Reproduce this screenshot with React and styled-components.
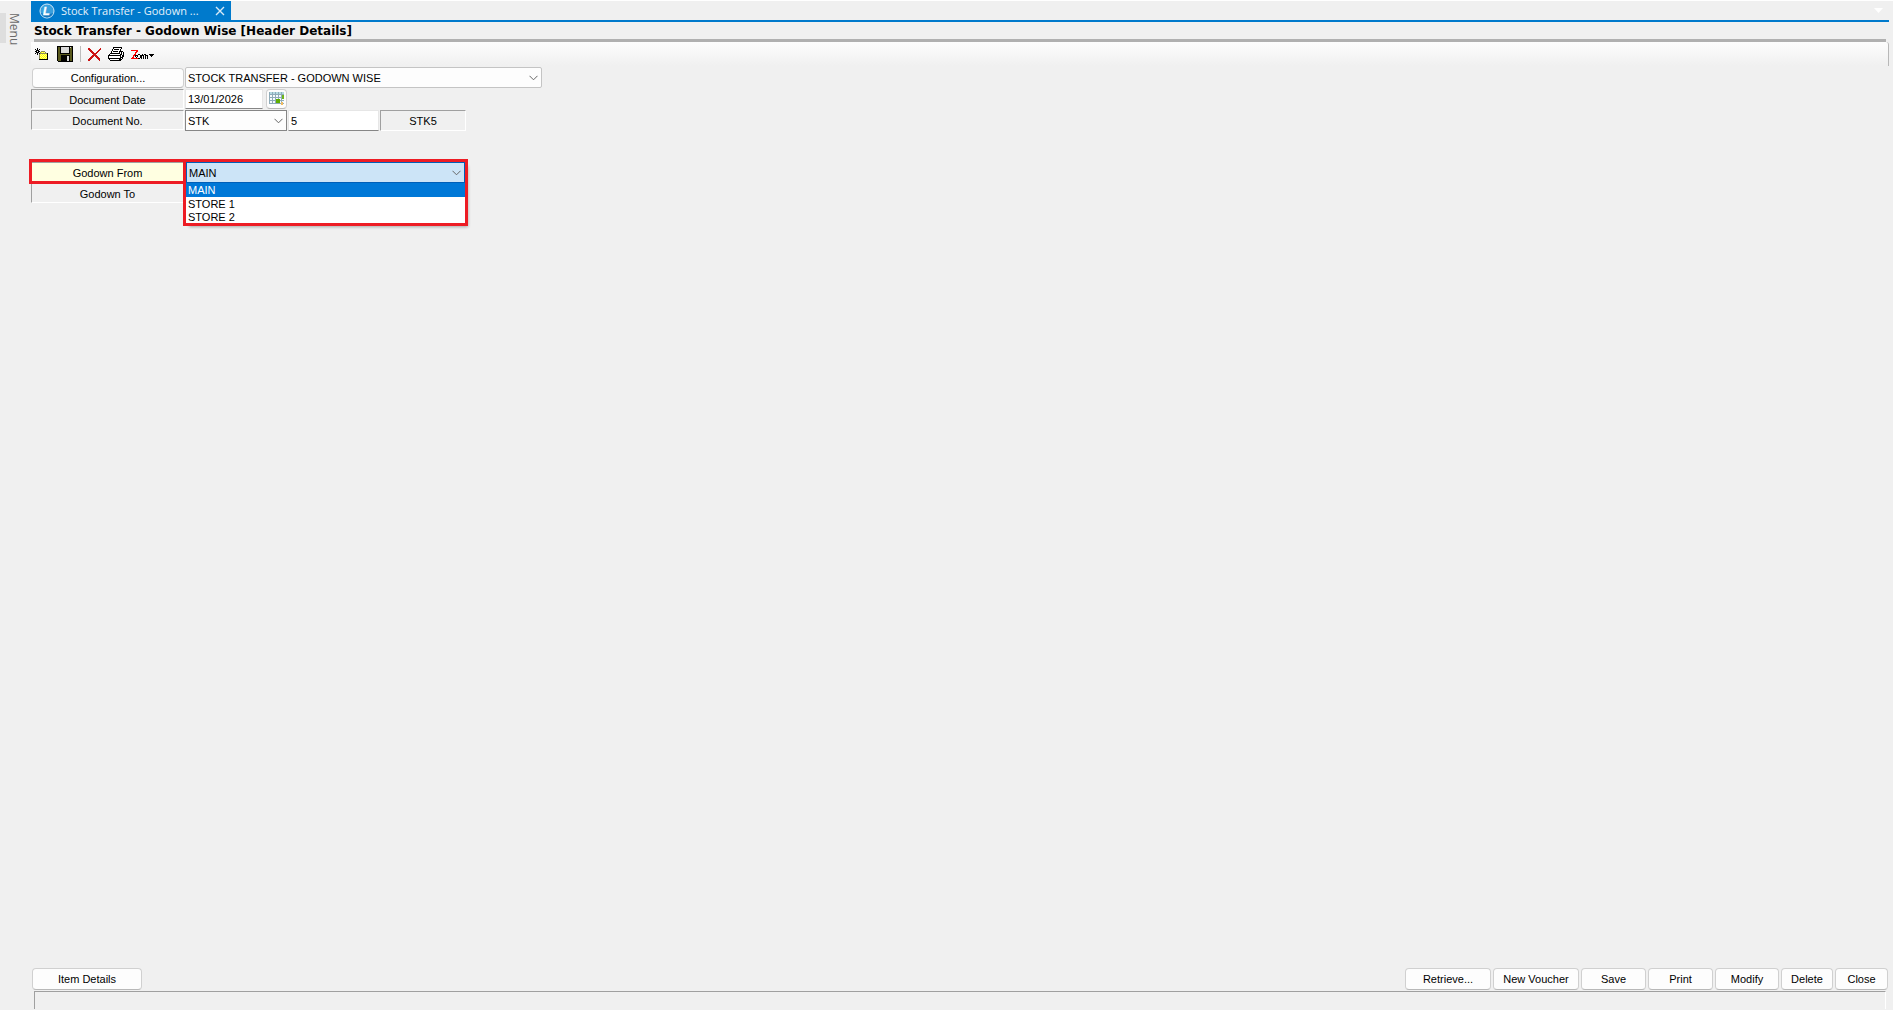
import React from 'react';
import styled, { createGlobalStyle } from 'styled-components';

const GlobalStyle = createGlobalStyle`
  * {
    box-sizing: border-box;
  }

  body {
    margin: 0;
    background: #f0f0f0;
    color: #000;
    font-family: 'Liberation Sans', Arial, sans-serif;
    font-size: 11px;
  }

  button, input, select {
    font: inherit;
    color: inherit;
    margin: 0;
  }
`;

const Page = styled.div`
  display: flex;
  min-height: 100vh;
  border-top: 1px solid #fff;
`;

const Sidebar = styled.nav`
  flex: none;
  width: 31px;
  padding-top: 12px;
`;

const MenuTab = styled.button`
  display: block;
  height: 30px;
  padding: 0 0 0 1px;
  border: 0;
  border-left: 6px solid #dedede;
  background: none;
  color: #6a6a6a;
  font-family: 'Open Sans', sans-serif;
  font-size: 12px;
  line-height: 14px;
  text-align: left;
  writing-mode: vertical-rl;
`;

const Main = styled.main`
  flex: 1;
  min-width: 0;
  display: flex;
  flex-direction: column;
  padding-right: 4px;
`;

const TabStrip = styled.div`
  display: flex;
  justify-content: space-between;
  align-items: center;
  height: 21px;
  padding-right: 6px;
  border-bottom: 2px solid #007acc;
`;

const Tab = styled.div`
  display: flex;
  align-items: center;
  width: 200px;
  height: 19px;
  padding: 0 6px 0 8px;
  background: #007acc;
  color: #e4f1fa;
  font-family: 'Open Sans', sans-serif;
  font-size: 11px;
`;

const TabTitle = styled.span`
  flex: 1;
  padding-left: 6px;
  white-space: nowrap;
`;

const PlainButton = styled.button`
  display: flex;
  align-items: center;
  padding: 0;
  border: 0;
  background: none;
`;

const NewButton = styled(PlainButton)`
  padding-right: 2px;
`;

const Title = styled.h1`
  margin: 0 3px;
  height: 20px;
  border-bottom: 3px solid #b0b0b0;
  font-family: 'DejaVu Sans', sans-serif;
  font-size: 12px;
  font-weight: bold;
  line-height: 18px;
`;

const Toolbar = styled.div`
  display: flex;
  align-items: center;
  gap: 7px;
  height: 24px;
  padding-left: 4px;
  background: linear-gradient(#fdfdfd, #f0f0f0);
  border-right: 1px solid #b8b8b8;
  border-radius: 0 3px 0 0;
`;

const Separator = styled.span`
  width: 1px;
  height: 16px;
  background: #bdbdbd;
`;

const Form = styled.form`
  flex: 1;
  padding-top: 1px;
`;

const Row = styled.div`
  display: flex;
  gap: 1px;
  height: 21px;
  margin-top: ${props => (props.$apart ? '31px' : '0')};
`;

const ConfigRow = styled(Row)`
  height: 22px;
`;

const Label = styled.label`
  width: 153px;
  height: 20px;
  border: 1px solid #a0a0a0;
  border-color: #a0a0a0 #fff #fff #a0a0a0;
  line-height: 20px;
  text-align: center;
`;

const MarkedLabel = styled(Label)`
  position: relative;
  z-index: 1;
  width: 151px;
  height: 19px;
  margin: 0 1px;
  border-width: 1px 0 0;
  background: #ffffe1;
  box-shadow: 0 0 0 3px #ed1c24;
`;

const PushButton = styled.button`
  height: ${props => props.$height || 22}px;
  width: ${props => props.$width}px;
  padding: 0;
  border: 1px solid #d0d0d0;
  border-bottom-color: #b8b8b8;
  border-radius: 4px;
  background: #fdfdfd;
  text-align: center;
`;

const ConfigButton = styled(PushButton)`
  margin: 1px 0 0 1px;
`;

const CalendarButton = styled(PushButton)`
  display: flex;
  align-items: center;
  justify-content: center;
  margin-left: 2px;
`;

const TextBox = styled.input`
  width: ${props => props.$width}px;
  height: ${props => props.$height || 21}px;
  padding: 0 2px;
  border: 1px solid #e6e6e6;
  border-bottom-color: #868686;
  border-radius: 0;
  background: #fff;
`;

const Combo = styled.div`
  position: relative;
  width: ${props => props.$width}px;
`;

const Select = styled.select`
  appearance: none;
  display: block;
  width: 100%;
  height: 21px;
  padding: 0 2px;
  border: 1px solid ${props => props.$border || '#c4c4c4'};
  border-radius: ${props => (props.$border ? '0' : '2px')};
  background: ${props => props.$fill || '#fdfdfd'};
`;

const Arrow = styled.span`
  position: absolute;
  top: 8px;
  right: 4px;
  display: flex;
  pointer-events: none;
`;

const Panel = styled.output`
  width: 86px;
  height: 21px;
  border: 1px solid #a0a0a0;
  border-color: #a0a0a0 #fff #fff #a0a0a0;
  line-height: 20px;
  text-align: center;
`;

const OpenCombo = styled(Combo)`
  z-index: 2;
  height: 61px;
  margin-left: 1px;
  box-shadow: 0 0 0 3px #ed1c24, 3px 4px 3px 0 rgba(0, 0, 0, 0.3);
`;

const OptionList = styled.ul`
  margin: 0;
  padding: 0;
  list-style: none;
  background: #fff;
`;

const Option = styled.li`
  height: ${props => (props.$active ? 14 : 13)}px;
  padding-left: 2px;
  background: ${props => (props.$active ? '#0078d7' : '#fff')};
  color: ${props => (props.$active ? '#fff' : '#000')};
  line-height: 14px;
`;

const Actions = styled.div`
  display: flex;
  justify-content: space-between;
  padding: 0 1px;
`;

const ActionGroup = styled.div`
  display: flex;
  gap: 2px;
`;

const StatusBar = styled.footer`
  height: 18px;
  margin: 1px 3px 1px;
  border-top: 1px solid #a0a0a0;
  border-left: 1px solid #a0a0a0;
  border-right: 1px solid #fff;
`;

// Bitmap icons: one letter per pixel, a space is transparent
const palette = {
  k: '#000000',
  y: '#ffff00',
  w: '#ffffff',
  o: '#5a5a1e',
  g: '#d8d8d8',
  s: '#8c8c5a',
  r: '#cc1414',
  R: '#ff0000',
  p: '#ffff80',
};

const newIcon = [
  '  k          ',
  'k k k        ',
  ' kkk         ',
  'kk kk ssss   ',
  ' kkk sypyps  ',
  'k k ksssssssk',
  '  k sypypypyk',
  '    spypypypk',
  '    sypypypyk',
  '    spypypypk',
  '    sypypypyk',
  '    kkkkkkkkk',
];

const saveIcon = [
  'kkkkkkkkkkkkkkkk',
  'kookggggggggkgok',
  'kookggggggggkook',
  'kookggggggggkook',
  'kookggggggggkook',
  'kookggggggggkook',
  'kookggggggggkook',
  'kookkkkkkkkkkook',
  'kooooooooooooook',
  'koookkkkkkkkkook',
  'koookkkkkkggkook',
  'koookkkkkkggkook',
  'koookkkkkkggkook',
  'koookkkkkkggkook',
  'koookkkkkkggkook',
  ' kkkkkkkkkkkkkkk',
];

const deleteIcon = [
  'rr          r ',
  'rrr        rr ',
  ' rrr      rr  ',
  '  rrr    rr   ',
  '   rrr  rr    ',
  '    rrrrr     ',
  '     rrr      ',
  '    rrrrr     ',
  '   rrr rrr    ',
  '  rrr   rrr   ',
  ' rrr     rrr  ',
  'rrr       rr  ',
  'rr         r  ',
];

const printIcon = [
  '     kkkkkkkkk  ',
  '     kwwwwwwwk  ',
  '    kwkkkkkwk   ',
  '    kwwwwwwwk   ',
  '   kwkkkkkwkkkk ',
  '   kwwwwwwwk kwk',
  '  kkkkkkkkkk kwk',
  ' kwwwwwwwwwwkkwk',
  'kkkkkkkkkkkkkwkk',
  'kwwwwwwwwwwwkwkk',
  'kwwwwwwwwwwwkkk ',
  'kkkkkkkkkkkkkwk ',
  ' kwwwwwwwwwkkk  ',
  '  kkkkkkkkkkk   ',
];

const zoomIcon = [
  'RRRRRRR                ',
  '     RR                ',
  '    RR                 ',
  '    R                  ',
  '   RR  kk  k kk   kkkkk',
  '  RRkkk  kkkk kkk  kkk ',
  '  R k k  kk k k k   k  ',
  ' RR  k   kk k k k      ',
  'RRRRRRRkk k k k k      ',
];

function PixelIcon({ rows }) {
  const width = Math.max(...rows.map(row => row.trimEnd().length));
  return (
    <svg width={width} height={rows.length} shapeRendering="crispEdges" aria-hidden="true">
      {rows.map((row, y) => row.split('').map((c, x) => (
        palette[c] ? <rect key={`${x}-${y}`} x={x} y={y} width="1" height="1" fill={palette[c]} /> : null
      )))}
    </svg>
  );
}

const Chevron = () => (
  <Arrow>
    <svg width="9" height="6" viewBox="0 0 9 6" aria-hidden="true">
      <path d="M0.5 0.8 L4.5 4.8 L8.5 0.8" fill="none" stroke="#666" strokeWidth="1" />
    </svg>
  </Arrow>
);

const Logo = () => (
  <svg width="16" height="16" viewBox="0 0 16 16" aria-hidden="true">
    <circle cx="8" cy="8" r="7" fill="#3a9fdc" stroke="#cfe8f7" strokeWidth="1" />
    <path d="M2 10 A6.3 6.3 0 0 0 14 10 Q8 12.5 2 10Z" fill="#1577bd" />
    <text x="4" y="12" fill="#fff" stroke="#fff" strokeWidth="0.4" fontFamily="Liberation Sans" fontSize="11" fontWeight="bold" fontStyle="italic">L</text>
  </svg>
);

const Calendar = () => (
  <svg width="15" height="14" shapeRendering="crispEdges" aria-hidden="true">
    <rect x="0" y="0" width="15" height="12" fill="#f4fbfc" />
    <rect x="0" y="0" width="15" height="2" fill="#b4dbe2" />
    <path d="M0.5 0V12 M3.5 0V12 M6.5 0V12 M9.5 0V12 M12.5 0V12 M0 2.5H15 M0 5.5H15 M0 8.5H15 M0 11.5H15" stroke="#8fabb8" />
    <rect x="7" y="7" width="4" height="4" fill="#5fae00" />
    <rect x="13" y="3" width="2" height="4" fill="#6fb61c" />
    <rect x="12" y="10" width="2" height="3" fill="#efbb62" />
  </svg>
);

const actions = [
  { name: 'Retrieve...', width: 86 },
  { name: 'New Voucher', width: 86 },
  { name: 'Save', width: 65 },
  { name: 'Print', width: 65 },
  { name: 'Modify', width: 64 },
  { name: 'Delete', width: 52 },
  { name: 'Close', width: 53 },
];

const godowns = ['MAIN', 'STORE 1', 'STORE 2'];

class App extends React.Component {
  constructor(props) {
    super(props);
    this.state = { from: 'MAIN' };
    this.pickFrom = this.pickFrom.bind(this);
  }

  pickFrom(from) {
    this.setState({ from });
  }

  render() {
    const { from } = this.state;
    return (
      <Page>
        <GlobalStyle />
        <Sidebar><MenuTab type="button">Menu</MenuTab></Sidebar>
        <Main>
          <TabStrip>
            <Tab>
              <Logo />
              <TabTitle>Stock Transfer - Godown ...</TabTitle>
              <PlainButton type="button" aria-label="Close tab">
                <svg width="10" height="10" aria-hidden="true">
                  <path d="M1 1 L9 9 M9 1 L1 9" stroke="#d6eaf7" strokeWidth="1.4" />
                </svg>
              </PlainButton>
            </Tab>
            <PlainButton type="button" aria-label="Open tabs">
              <svg width="9" height="5" aria-hidden="true"><path d="M0 0H9L4.5 5Z" fill="#fff" /></svg>
            </PlainButton>
          </TabStrip>
          <Title>Stock Transfer - Godown Wise [Header Details]</Title>
          <Toolbar>
            <NewButton type="button" aria-label="New"><PixelIcon rows={newIcon} /></NewButton>
            <PlainButton type="button" aria-label="Save"><PixelIcon rows={saveIcon} /></PlainButton>
            <Separator />
            <PlainButton type="button" aria-label="Delete"><PixelIcon rows={deleteIcon} /></PlainButton>
            <PlainButton type="button" aria-label="Print"><PixelIcon rows={printIcon} /></PlainButton>
            <PlainButton type="button" aria-label="Zoom"><PixelIcon rows={zoomIcon} /></PlainButton>
          </Toolbar>
          <Form>
            <ConfigRow>
              <ConfigButton type="button" $width={152} $height={20}>Configuration...</ConfigButton>
              <Combo $width={357}>
                <Select aria-label="Configuration" defaultValue="godown">
                  <option value="godown">STOCK TRANSFER - GODOWN WISE</option>
                </Select>
                <Chevron />
              </Combo>
            </ConfigRow>
            <Row>
              <Label htmlFor="date">Document Date</Label>
              <TextBox id="date" $width={78} $height={20} defaultValue="13/01/2026" />
              <CalendarButton type="button" $width={21} $height={20} aria-label="Pick a date"><Calendar /></CalendarButton>
            </Row>
            <Row>
              <Label htmlFor="series">Document No.</Label>
              <Combo $width={102}>
                <Select id="series" $border="#868686" defaultValue="STK">
                  <option>STK</option>
                </Select>
                <Chevron />
              </Combo>
              <TextBox aria-label="Number" $width={91} defaultValue="5" />
              <Panel>STK5</Panel>
            </Row>
            <Row $apart>
              <MarkedLabel htmlFor="from">Godown From</MarkedLabel>
              <OpenCombo $width={279}>
                <Select
                  id="from"
                  $border="#005fb8"
                  $fill="#cce4f7"
                  value={from}
                  onChange={e => this.pickFrom(e.target.value)}
                >
                  {godowns.map(name => <option key={name}>{name}</option>)}
                </Select>
                <Chevron />
                <OptionList role="listbox" aria-label="Godowns">
                  {godowns.map(name => (
                    <Option
                      key={name}
                      role="option"
                      aria-selected={name === from}
                      $active={name === from}
                      onClick={() => this.pickFrom(name)}
                    >
                      {name}
                    </Option>
                  ))}
                </OptionList>
              </OpenCombo>
            </Row>
            <Row>
              <Label as="div">Godown To</Label>
            </Row>
          </Form>
          <Actions>
            <PushButton type="button" $width={110}>Item Details</PushButton>
            <ActionGroup>
              {actions.map(({ name, width }) => (
                <PushButton key={name} type="button" $width={width}>{name}</PushButton>
              ))}
            </ActionGroup>
          </Actions>
          <StatusBar />
        </Main>
      </Page>
    );
  }
}

export default App;
